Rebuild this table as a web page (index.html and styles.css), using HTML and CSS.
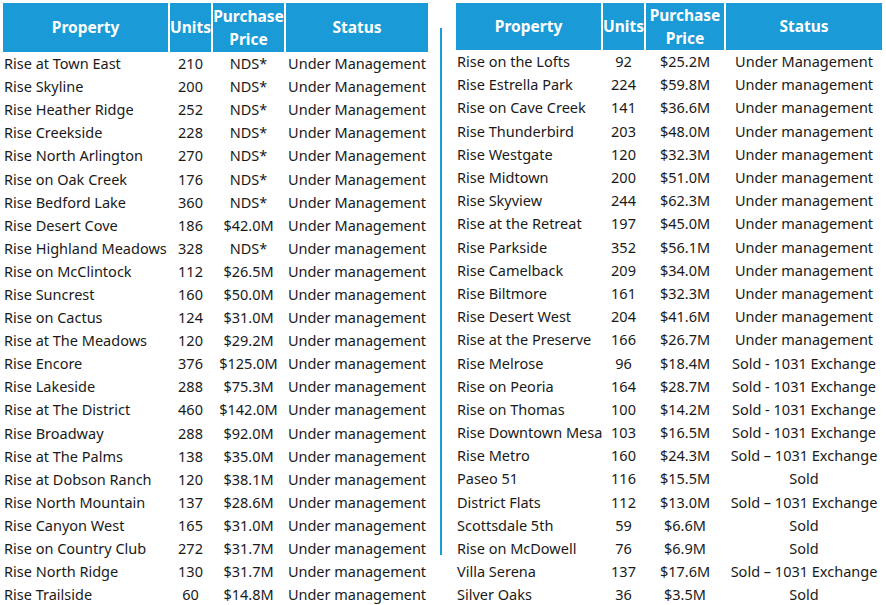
FILE: index.html
```html
<!DOCTYPE html>
<html>
<head>
<meta charset="utf-8">
<link rel="stylesheet" href="styles.css">
</head>
<body>
<div class="page">
  <table class="tbl tbl-left">
    <colgroup><col class="c-prop-l"><col class="c-units"><col class="c-price-l"><col class="c-status-l"></colgroup>
    <thead>
      <tr><th>Property</th><th>Units</th><th>Purchase Price</th><th>Status</th></tr>
    </thead>
    <tbody>
      <tr><td>Rise at Town East</td><td>210</td><td>NDS*</td><td>Under Management</td></tr>
      <tr><td>Rise Skyline</td><td>200</td><td>NDS*</td><td>Under Management</td></tr>
      <tr><td>Rise Heather Ridge</td><td>252</td><td>NDS*</td><td>Under Management</td></tr>
      <tr><td>Rise Creekside</td><td>228</td><td>NDS*</td><td>Under Management</td></tr>
      <tr><td>Rise North Arlington</td><td>270</td><td>NDS*</td><td>Under Management</td></tr>
      <tr><td>Rise on Oak Creek</td><td>176</td><td>NDS*</td><td>Under Management</td></tr>
      <tr><td>Rise Bedford Lake</td><td>360</td><td>NDS*</td><td>Under Management</td></tr>
      <tr><td>Rise Desert Cove</td><td>186</td><td>$42.0M</td><td>Under Management</td></tr>
      <tr><td>Rise Highland Meadows</td><td>328</td><td>NDS*</td><td>Under management</td></tr>
      <tr><td>Rise on McClintock</td><td>112</td><td>$26.5M</td><td>Under management</td></tr>
      <tr><td>Rise Suncrest</td><td>160</td><td>$50.0M</td><td>Under management</td></tr>
      <tr><td>Rise on Cactus</td><td>124</td><td>$31.0M</td><td>Under management</td></tr>
      <tr><td>Rise at The Meadows</td><td>120</td><td>$29.2M</td><td>Under management</td></tr>
      <tr><td>Rise Encore</td><td>376</td><td>$125.0M</td><td>Under management</td></tr>
      <tr><td>Rise Lakeside</td><td>288</td><td>$75.3M</td><td>Under management</td></tr>
      <tr><td>Rise at The District</td><td>460</td><td>$142.0M</td><td>Under management</td></tr>
      <tr><td>Rise Broadway</td><td>288</td><td>$92.0M</td><td>Under management</td></tr>
      <tr><td>Rise at The Palms</td><td>138</td><td>$35.0M</td><td>Under management</td></tr>
      <tr><td>Rise at Dobson Ranch</td><td>120</td><td>$38.1M</td><td>Under management</td></tr>
      <tr><td>Rise North Mountain</td><td>137</td><td>$28.6M</td><td>Under management</td></tr>
      <tr><td>Rise Canyon West</td><td>165</td><td>$31.0M</td><td>Under management</td></tr>
      <tr><td>Rise on Country Club</td><td>272</td><td>$31.7M</td><td>Under management</td></tr>
      <tr><td>Rise North Ridge</td><td>130</td><td>$31.7M</td><td>Under management</td></tr>
      <tr><td>Rise Trailside</td><td>60</td><td>$14.8M</td><td>Under management</td></tr>
    </tbody>
  </table>
  <div class="divider"></div>
  <table class="tbl tbl-right">
    <colgroup><col class="c-prop-r"><col class="c-units"><col class="c-price-r"><col class="c-status-r"></colgroup>
    <thead>
      <tr><th>Property</th><th>Units</th><th>Purchase Price</th><th>Status</th></tr>
    </thead>
    <tbody>
      <tr><td>Rise on the Lofts</td><td>92</td><td>$25.2M</td><td>Under Management</td></tr>
      <tr><td>Rise Estrella Park</td><td>224</td><td>$59.8M</td><td>Under management</td></tr>
      <tr><td>Rise on Cave Creek</td><td>141</td><td>$36.6M</td><td>Under management</td></tr>
      <tr><td>Rise Thunderbird</td><td>203</td><td>$48.0M</td><td>Under management</td></tr>
      <tr><td>Rise Westgate</td><td>120</td><td>$32.3M</td><td>Under management</td></tr>
      <tr><td>Rise Midtown</td><td>200</td><td>$51.0M</td><td>Under management</td></tr>
      <tr><td>Rise Skyview</td><td>244</td><td>$62.3M</td><td>Under management</td></tr>
      <tr><td>Rise at the Retreat</td><td>197</td><td>$45.0M</td><td>Under management</td></tr>
      <tr><td>Rise Parkside</td><td>352</td><td>$56.1M</td><td>Under management</td></tr>
      <tr><td>Rise Camelback</td><td>209</td><td>$34.0M</td><td>Under management</td></tr>
      <tr><td>Rise Biltmore</td><td>161</td><td>$32.3M</td><td>Under management</td></tr>
      <tr><td>Rise Desert West</td><td>204</td><td>$41.6M</td><td>Under management</td></tr>
      <tr><td>Rise at the Preserve</td><td>166</td><td>$26.7M</td><td>Under management</td></tr>
      <tr><td>Rise Melrose</td><td>96</td><td>$18.4M</td><td>Sold - 1031 Exchange</td></tr>
      <tr><td>Rise on Peoria</td><td>164</td><td>$28.7M</td><td>Sold - 1031 Exchange</td></tr>
      <tr><td>Rise on Thomas</td><td>100</td><td>$14.2M</td><td>Sold - 1031 Exchange</td></tr>
      <tr><td>Rise Downtown Mesa</td><td>103</td><td>$16.5M</td><td>Sold - 1031 Exchange</td></tr>
      <tr><td>Rise Metro</td><td>160</td><td>$24.3M</td><td>Sold – 1031 Exchange</td></tr>
      <tr><td>Paseo 51</td><td>116</td><td>$15.5M</td><td>Sold</td></tr>
      <tr><td>District Flats</td><td>112</td><td>$13.0M</td><td>Sold – 1031 Exchange</td></tr>
      <tr><td>Scottsdale 5th</td><td>59</td><td>$6.6M</td><td>Sold</td></tr>
      <tr><td>Rise on McDowell</td><td>76</td><td>$6.9M</td><td>Sold</td></tr>
      <tr><td>Villa Serena</td><td>137</td><td>$17.6M</td><td>Sold – 1031 Exchange</td></tr>
      <tr><td>Silver Oaks</td><td>36</td><td>$3.5M</td><td>Sold</td></tr>
    </tbody>
  </table>
</div>
</body>
</html>
```

FILE: styles.css
```css
html, body {
  margin: 0;
  padding: 0;
  background: #ffffff;
}

.page {
  display: flex;
  align-items: flex-start;
  padding-top: 3px;
  font-family: "Noto Sans", "DejaVu Sans", sans-serif;
  color: #1a1a1a;
}

.tbl {
  border-collapse: separate;
  border-spacing: 2px 0;
  table-layout: fixed;
  flex: none;
}

.tbl-left {
  margin-left: 1px;
  width: 429px;
}

.tbl-right {
  width: 430px;
}

.c-prop-l { width: 165px; }
.c-units { width: 41px; }
.c-price-l { width: 71px; }
.c-status-l { width: 142px; }
.c-prop-r { width: 145px; }
.c-price-r { width: 78px; }
.c-status-r { width: 156px; }

.tbl th {
  background: #1a9bd7;
  color: #ffffff;
  font-weight: 700;
  font-size: 15.5px;
  line-height: 23px;
  padding: 0;
  text-align: center;
  vertical-align: middle;
}

.tbl-left th { height: 49px; }
.tbl-right th { height: 47px; }

.tbl td {
  font-size: 14.5px;
  line-height: 23px;
  height: 23.1px;
  padding: 0;
  text-align: center;
  white-space: nowrap;
  overflow: visible;
}

.tbl td:first-child {
  text-align: left;
  padding-left: 1px;
}

.tbl-right td { height: 23.2px; }

.divider {
  flex: none;
  width: 2px;
  height: 527px;
  margin: 25px 12px 0 10px;
  background: #1a9bd7;
}
```
